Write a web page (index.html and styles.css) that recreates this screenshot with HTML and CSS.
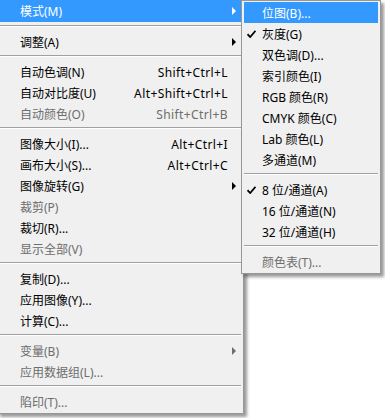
FILE: index.html
```html
<!DOCTYPE html>
<html lang="zh-CN">
<head>
<meta charset="UTF-8">
<title>图像菜单</title>
<link rel="stylesheet" href="styles.css">
</head>
<body>

<div class="stage">
  <div class="menu main-menu">
    <div class="item first active"><span class="label">模式(M)</span><span class="key"></span><span class="arrow"></span></div>
    <div class="sep"></div>
    <div class="item"><span class="label">调整(A)</span><span class="key"></span><span class="arrow"></span></div>
    <div class="sep"></div>
    <div class="item"><span class="label">自动色调(N)</span><span class="key">Shift+Ctrl+L</span></div>
    <div class="item"><span class="label">自动对比度(U)</span><span class="key">Alt+Shift+Ctrl+L</span></div>
    <div class="item off"><span class="label">自动颜色(O)</span><span class="key">Shift+Ctrl+B</span></div>
    <div class="sep"></div>
    <div class="item"><span class="label">图像大小(I)...</span><span class="key">Alt+Ctrl+I</span></div>
    <div class="item"><span class="label">画布大小(S)...</span><span class="key">Alt+Ctrl+C</span></div>
    <div class="item"><span class="label">图像旋转(G)</span><span class="key"></span><span class="arrow"></span></div>
    <div class="item off"><span class="label">裁剪(P)</span></div>
    <div class="item"><span class="label">裁切(R)...</span></div>
    <div class="item off"><span class="label">显示全部(V)</span></div>
    <div class="sep"></div>
    <div class="item"><span class="label">复制(D)...</span></div>
    <div class="item"><span class="label">应用图像(Y)...</span></div>
    <div class="item"><span class="label">计算(C)...</span></div>
    <div class="sep"></div>
    <div class="item off"><span class="label">变量(B)</span><span class="key"></span><span class="arrow"></span></div>
    <div class="item off"><span class="label">应用数据组(L)...</span></div>
    <div class="sep"></div>
    <div class="item off"><span class="label">陷印(T)...</span></div>
  </div>

  <!-- 模式 子菜单 -->
  <div class="menu sub-menu">
    <div class="item active"><span class="check"></span><span class="label">位图(B)...</span></div>
    <div class="item"><span class="check"><svg width="9" height="8" viewBox="0 0 9 8"><path d="M0.5 4.2 L3.2 7 L8.5 0.8" fill="none" stroke="#000" stroke-width="1.8"/></svg></span><span class="label">灰度(G)</span></div>
    <div class="item"><span class="check"></span><span class="label">双色调(D)...</span></div>
    <div class="item"><span class="check"></span><span class="label">索引颜色(I)</span></div>
    <div class="item"><span class="check"></span><span class="label">RGB 颜色(R)</span></div>
    <div class="item"><span class="check"></span><span class="label">CMYK 颜色(C)</span></div>
    <div class="item"><span class="check"></span><span class="label">Lab 颜色(L)</span></div>
    <div class="item"><span class="check"></span><span class="label">多通道(M)</span></div>
    <div class="sep"></div>
    <div class="item"><span class="check"><svg width="9" height="8" viewBox="0 0 9 8"><path d="M0.5 4.2 L3.2 7 L8.5 0.8" fill="none" stroke="#000" stroke-width="1.8"/></svg></span><span class="label">8 位/通道(A)</span></div>
    <div class="item"><span class="check"></span><span class="label">16 位/通道(N)</span></div>
    <div class="item"><span class="check"></span><span class="label">32 位/通道(H)</span></div>
    <div class="sep"></div>
    <div class="item off"><span class="check"></span><span class="label">颜色表(T)...</span></div>
  </div>
</div>

</body>
</html>
```

FILE: styles.css
```css
body {
  margin: 0;
  padding: 0;
  background-color: #fff;
  font-family: "Noto Sans", "Noto Sans CJK SC", sans-serif;
  font-size: 12px;
  color: #000;
  overflow: hidden;
}

.stage {
  position: relative;
  width: 385px;
  height: 418px;
}

.menu {
  background-color: #f0f0f0;
  border: 1px solid #979797;
  box-shadow: 3px 3px 3px rgba(0, 0, 0, 0.4);
  padding: 1px 2px 1px 2px;
}

.main-menu {
  width: 241px;
  margin-left: -3px;
  border-top: none;
  padding-top: 0;
}

.item {
  display: flex;
  align-items: center;
  height: 21px;
  line-height: 21px;
  white-space: nowrap;
}

.main-menu .item {
  padding-left: 20px;
}

.main-menu .item.first {
  height: 22px;
}

.item .label {
  flex: 1;
  padding-top: 1px;
}

.item .key {
  text-align: right;
  padding-top: 1px;
  letter-spacing: 0.4px;
}

.item .arrow {
  width: 0;
  height: 0;
  margin: 0 5px 0 5px;
  border-top: 4px solid transparent;
  border-bottom: 4px solid transparent;
  border-left: 4px solid #000;
}

.main-menu .item .key:last-child {
  margin-right: 13px;
}

.item.active {
  background-color: #3399ff;
  color: #fff;
}

.item.active .arrow {
  border-left-color: #fff;
}

.item.off {
  color: #6d6d6d;
}

.item.off .arrow {
  border-left-color: #6d6d6d;
}

.sep {
  height: 0;
  margin: 3px 0 4px 0;
  border-top: 1px solid #a0a0a0;
  border-bottom: 1px solid #fff;
}

/* 子菜单 */
.sub-menu {
  position: absolute;
  top: 0;
  left: 241px;
  width: 134px;
}

.sub-menu .item {
  padding-left: 3px;
}

.sub-menu .check {
  width: 15px;
  height: 21px;
  display: flex;
  align-items: center;
}
```
